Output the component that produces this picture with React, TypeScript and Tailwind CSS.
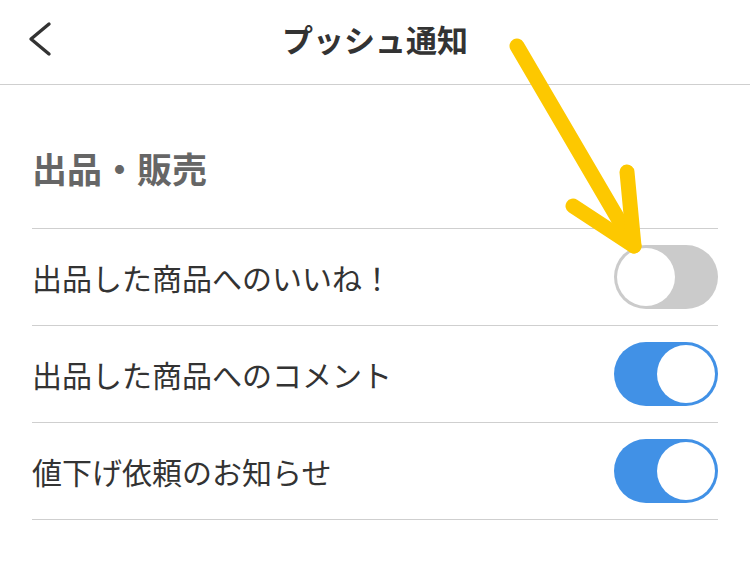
const ROWS: Array<{ label: string; on: boolean }> = [
  { label: '出品した商品へのいいね！', on: false },
  { label: '出品した商品へのコメント', on: true },
  { label: '値下げ依頼のお知らせ', on: true },
]

function Toggle({ on }: { on: boolean }) {
  return (
    <div
      className={
        on
          ? 'w-[104px] h-[64px] rounded-full bg-[#4191e6] p-[3px] flex justify-end'
          : 'w-[104px] h-[64px] rounded-full bg-[#cbcbcb] p-[3px] flex justify-start'
      }
    >
      <div className="w-[58px] h-[58px] rounded-full bg-white" />
    </div>
  )
}

export default function App() {
  return (
    <div
      className="relative w-[750px] h-[568px] bg-white overflow-hidden"
      style={{ fontFamily: '"Noto Sans CJK JP", "Noto Sans", sans-serif' }}
    >
      {/* Header */}
      <div className="relative h-[85px] border-b border-[#cfcfcf] flex items-center justify-center">
        <svg className="absolute left-[26px] top-[20px]" width="30" height="38" viewBox="0 0 30 38">
          <polyline
            points="23,4 5,19 23,34"
            fill="none"
            stroke="#333"
            strokeWidth="3.4"
            strokeLinecap="round"
            strokeLinejoin="round"
          />
        </svg>
        <h1 className="text-[31px] font-bold text-[#333] leading-none -mt-[8px]">プッシュ通知</h1>
      </div>

      {/* Section */}
      <div className="px-[32px]">
        <h2 className="h-[143px] flex items-center pt-[24px] text-[35px] font-bold text-[#666]">
          出品・販売
        </h2>
        <div className="w-[686px] border-t border-[#cfcfcf]">
          {ROWS.map((row) => (
            <div
              key={row.label}
              className="h-[97px] border-b border-[#cfcfcf] flex items-center justify-between"
            >
              <span className="text-[30px] text-[#333] leading-none">{row.label}</span>
              <Toggle on={row.on} />
            </div>
          ))}
        </div>
      </div>

      {/* Annotation arrow */}
      <svg
        className="absolute left-0 top-0 pointer-events-none"
        width="750"
        height="568"
        viewBox="0 0 750 568"
      >
        <g stroke="#fdc800" strokeWidth="15" strokeLinecap="round" strokeLinejoin="round" fill="none">
          <path d="M517 46 L634 246" />
          <path d="M573 206 L634 246 L627 172" />
        </g>
      </svg>
    </div>
  )
}
